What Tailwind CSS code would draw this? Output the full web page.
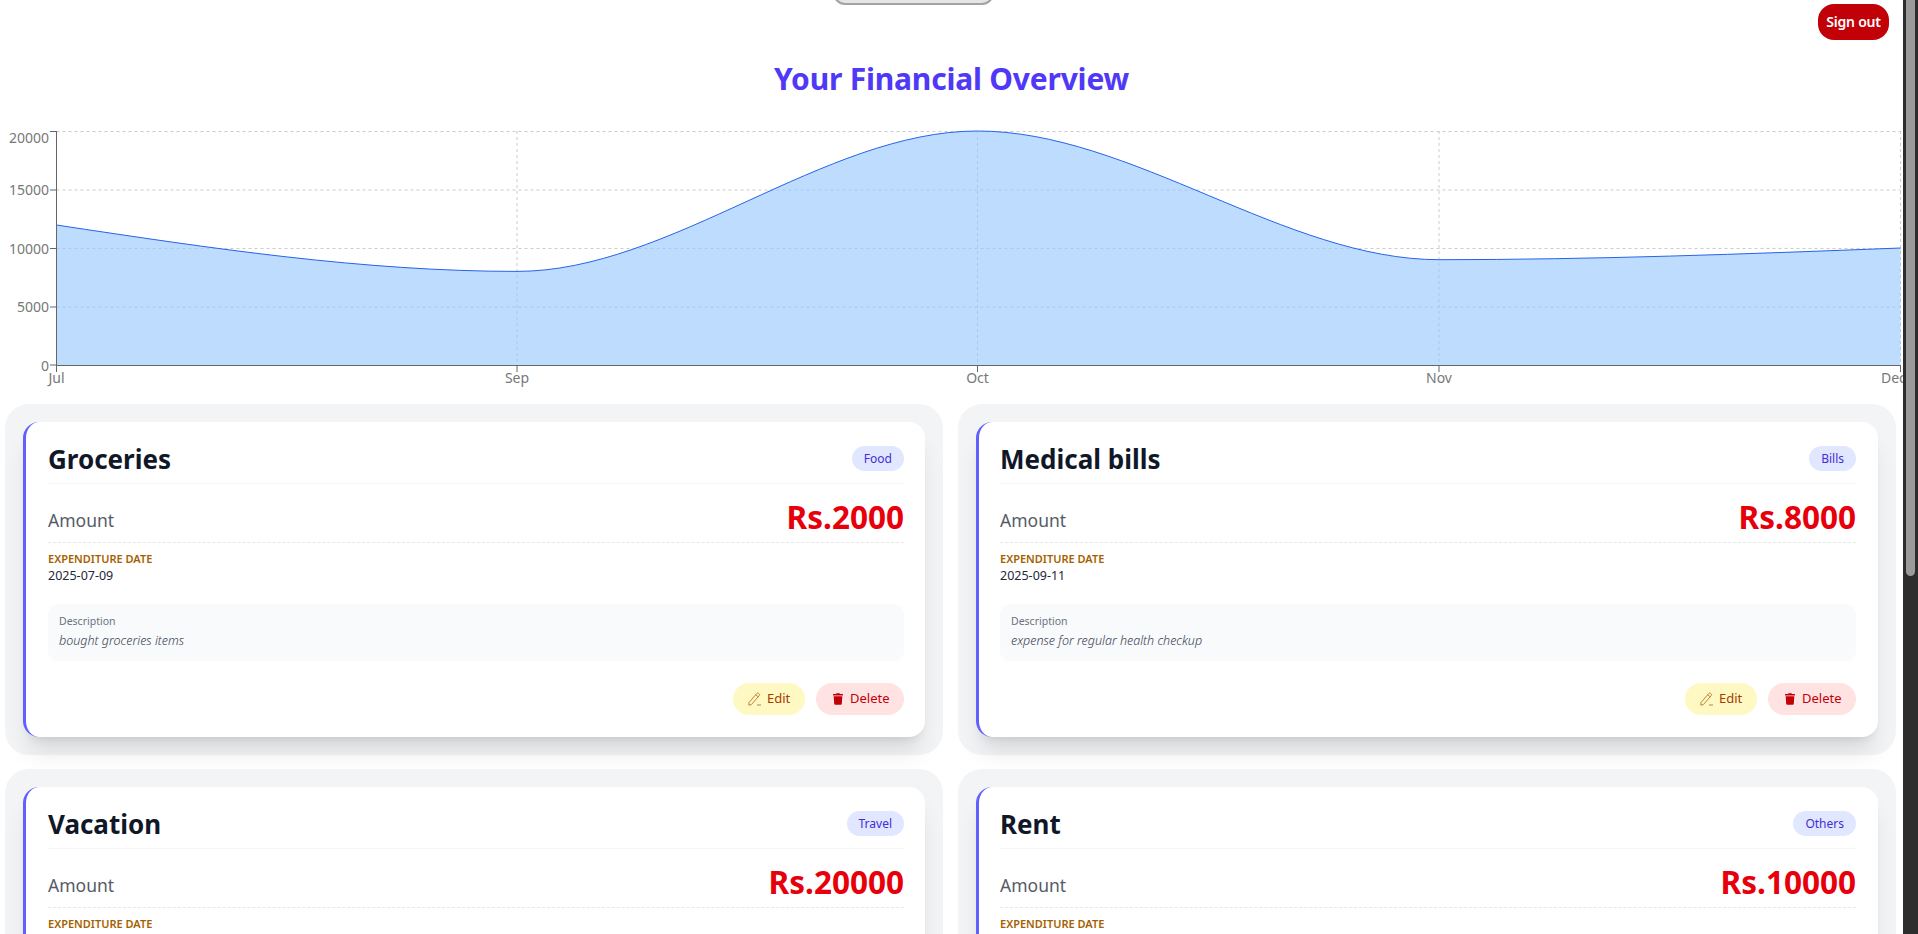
<!DOCTYPE html>
<html lang="en">
<head>
<meta charset="utf-8">
<title>Your Financial Overview</title>
<script src="https://cdn.jsdelivr.net/npm/@tailwindcss/browser@4"></script>
</head>
<body class="bg-white overflow-hidden font-['Noto_Sans',sans-serif]">
<div class="flex h-[934px] w-[1918px] overflow-hidden">
  <main class="w-[1903px] h-[934px] overflow-hidden">
    <header class="relative h-[40px] flex justify-end pt-[4px] pr-[14px]">
      <div class="absolute left-[833px] top-[-30px] w-[161px] h-[35px] rounded-xl bg-[#e5e5e5] border-2 border-[#a3a3a3]"></div>
      <button class="w-[71px] h-[36px] rounded-2xl bg-[#c10007] text-white text-[14px] leading-none font-semibold tracking-[-0.2px]">Sign out</button>
    </header>
    <h1 class="mt-[19px] h-[40px] leading-[40px] text-center text-[30px] font-bold text-[#4f39f6] tracking-[-0.2px]">Your Financial Overview</h1>
    <svg class="mt-[21px] block shrink-0" width="1903" height="270" viewBox="0 120 1903 270" font-size="14" fill="#777">
      <g stroke="#ccc" stroke-dasharray="3 3" fill="none">
        <path d="M56.5 131.5H1901M56.5 190H1901M56.5 248.5H1901M56.5 307H1901"/>
        <path d="M517 131V365M977.5 131V365M1439 131V365M1900.5 131V365"/>
      </g>
      <path d="M56.5 225C210 248.2 363.500 271.400 517 271.400C670.500 271.400 824 131 977.500 131C1131 131 1285.500 259.700 1439 259.700C1593 259.700 1746.500 254 1900.500 248V365H56.500Z" fill="#93c5fd" fill-opacity="0.6"/>
      <path d="M56.5 225C210 248.200 363.500 271.400 517 271.400C670.500 271.400 824 131 977.500 131C1131 131 1285.500 259.700 1439 259.700C1593 259.700 1746.500 254 1900.500 248" fill="none" stroke="#2563eb" stroke-width="1"/>
      <g stroke="#666" fill="none">
        <path d="M56.500 131V365.500H1901"/>
        <path d="M50 131.500H56.500M50 190H56.500M50 248.500H56.500M50 307H56.500M50 365H56.500"/>
        <path d="M56.500 365V372M517 365V372M977.500 365V372M1439 365V372M1900.500 365V372"/>
      </g>
      <g text-anchor="end">
        <text x="49" y="143">20000</text>
        <text x="49" y="195">15000</text>
        <text x="49" y="253.500">10000</text>
        <text x="49" y="312">5000</text>
        <text x="49" y="370.500">0</text>
      </g>
      <g text-anchor="middle">
        <text x="56.500" y="383">Jul</text>
        <text x="517" y="383">Sep</text>
        <text x="977.500" y="383">Oct</text>
        <text x="1439" y="383">Nov</text>
      </g>
      <text x="1881" y="383">Dec</text>
    </svg>
    <section class="mt-[14px] ml-[5px] w-[1891px] grid grid-cols-[938px_938px] gap-x-[15px] gap-y-[14px]">

      <article class="bg-[#f3f4f6] rounded-3xl p-[18px] h-[351px]">
        <div class="bg-white rounded-2xl border-l-[3px] border-[#615fff] shadow-xl h-[315px] pt-[20px] pl-[22px] pr-[21px]">
          <div class="flex items-center justify-between h-[42px] pb-[8px] border-b border-[#f3f4f6]">
            <h2 class="text-[26px] leading-[32px] font-bold text-[#101828]">Groceries</h2>
            <span class="h-[25px] leading-[25px] px-[12px] rounded-full bg-[#e0e7ff] text-[#432dd7] text-[12px]">Food</span>
          </div>
          <div class="flex items-center justify-between mt-[19px] h-[40px] pb-[3px] border-b border-dashed border-[#e5e7eb]">
            <span class="mb-[2px] text-[17.5px] text-[#555c68]">Amount</span>
            <span class="mb-[8px] text-[31.5px] leading-[36px] font-bold text-[#e7000b]">Rs.2000</span>
          </div>
          <p class="mt-[8px] text-[11px] leading-[16px] font-semibold text-[#a65f00] uppercase">Expenditure Date</p>
          <p class="mt-[1px] text-[12.5px] leading-[16px] text-[#1e2939]">2025-07-09</p>
          <div class="mt-[20px] h-[57px] pt-[9px] px-[11px] rounded-[10px] bg-[#f9fafb]">
            <p class="text-[10.5px] leading-[16px] text-[#6a7282]">Description</p>
            <p class="mt-[4px] text-[12.5px] leading-[16px] italic font-light text-[#364153]">bought groceries items</p>
          </div>
          <div class="mt-[22px] flex justify-end gap-[11px]">
            <button class="flex items-center gap-[6px] w-[72px] h-[32px] pl-[15px] rounded-full bg-[#fef9c2] text-[#a63c00] text-[13px]">
              <svg class="w-[13px] h-[14px] shrink-0" viewBox="0 0 13 14" fill="none" stroke="#b9772a" stroke-width="0.9"><path d="M1 10.500 8.800 1.500a1.200 1.200 0 0 1 1.700-.1l.6.5a1.200 1.200 0 0 1 .1 1.700L3.400 12.600 .8 13.200Z"/><path d="M7.800 2.800l2.300 2M9 13h4" /></svg>Edit
            </button>
            <button class="flex items-center gap-[7px] w-[88px] h-[32px] pl-[17px] rounded-full bg-[#ffe2e2] text-[#c10007] text-[13px]">
              <svg class="w-[10px] h-[12px] shrink-0" viewBox="0 0 448 512" fill="#c10007"><path d="M432 32H312l-9.400-18.700A24 24 0 0 0 281.100 0H166.800a23.720 23.720 0 0 0-21.400 13.300L136 32H16A16 16 0 0 0 0 48v32a16 16 0 0 0 16 16h416a16 16 0 0 0 16-16V48a16 16 0 0 0-16-16zM53.200 467a48 48 0 0 0 47.900 45h245.800a48 48 0 0 0 47.900-45L416 128H32z"/></svg>Delete
            </button>
          </div>
        </div>
      </article>

      <article class="bg-[#f3f4f6] rounded-3xl p-[18px] h-[351px]">
        <div class="bg-white rounded-2xl border-l-[3px] border-[#615fff] shadow-xl h-[315px] pt-[20px] pl-[21px] pr-[22px]">
          <div class="flex items-center justify-between h-[42px] pb-[8px] border-b border-[#f3f4f6]">
            <h2 class="text-[26px] leading-[32px] font-bold text-[#101828]">Medical bills</h2>
            <span class="h-[25px] leading-[25px] px-[12px] rounded-full bg-[#e0e7ff] text-[#432dd7] text-[12px]">Bills</span>
          </div>
          <div class="flex items-center justify-between mt-[19px] h-[40px] pb-[3px] border-b border-dashed border-[#e5e7eb]">
            <span class="mb-[2px] text-[17.5px] text-[#555c68]">Amount</span>
            <span class="mb-[8px] text-[31.5px] leading-[36px] font-bold text-[#e7000b]">Rs.8000</span>
          </div>
          <p class="mt-[8px] text-[11px] leading-[16px] font-semibold text-[#a65f00] uppercase">Expenditure Date</p>
          <p class="mt-[1px] text-[12.5px] leading-[16px] text-[#1e2939]">2025-09-11</p>
          <div class="mt-[20px] h-[57px] pt-[9px] px-[11px] rounded-[10px] bg-[#f9fafb]">
            <p class="text-[10.5px] leading-[16px] text-[#6a7282]">Description</p>
            <p class="mt-[4px] text-[12.5px] leading-[16px] italic font-light text-[#364153]">expense for regular health checkup</p>
          </div>
          <div class="mt-[22px] flex justify-end gap-[11px]">
            <button class="flex items-center gap-[6px] w-[72px] h-[32px] pl-[15px] rounded-full bg-[#fef9c2] text-[#a63c00] text-[13px]">
              <svg class="w-[13px] h-[14px] shrink-0" viewBox="0 0 13 14" fill="none" stroke="#b9772a" stroke-width="0.9"><path d="M1 10.500 8.800 1.500a1.200 1.200 0 0 1 1.700-.1l.6.5a1.200 1.200 0 0 1 .1 1.700L3.400 12.600 .8 13.200Z"/><path d="M7.800 2.800l2.300 2M9 13h4" /></svg>Edit
            </button>
            <button class="flex items-center gap-[7px] w-[88px] h-[32px] pl-[17px] rounded-full bg-[#ffe2e2] text-[#c10007] text-[13px]">
              <svg class="w-[10px] h-[12px] shrink-0" viewBox="0 0 448 512" fill="#c10007"><path d="M432 32H312l-9.400-18.700A24 24 0 0 0 281.100 0H166.800a23.720 23.720 0 0 0-21.400 13.300L136 32H16A16 16 0 0 0 0 48v32a16 16 0 0 0 16 16h416a16 16 0 0 0 16-16V48a16 16 0 0 0-16-16zM53.200 467a48 48 0 0 0 47.900 45h245.800a48 48 0 0 0 47.900-45L416 128H32z"/></svg>Delete
            </button>
          </div>
        </div>
      </article>

      <article class="bg-[#f3f4f6] rounded-3xl p-[18px] h-[351px]">
        <div class="bg-white rounded-2xl border-l-[3px] border-[#615fff] shadow-xl h-[315px] pt-[20px] pl-[22px] pr-[21px]">
          <div class="flex items-center justify-between h-[42px] pb-[8px] border-b border-[#f3f4f6]">
            <h2 class="text-[26px] leading-[32px] font-bold text-[#101828]">Vacation</h2>
            <span class="h-[25px] leading-[25px] px-[12px] rounded-full bg-[#e0e7ff] text-[#432dd7] text-[12px]">Travel</span>
          </div>
          <div class="flex items-center justify-between mt-[19px] h-[40px] pb-[3px] border-b border-dashed border-[#e5e7eb]">
            <span class="mb-[2px] text-[17.5px] text-[#555c68]">Amount</span>
            <span class="mb-[8px] text-[31.5px] leading-[36px] font-bold text-[#e7000b]">Rs.20000</span>
          </div>
          <p class="mt-[8px] text-[11px] leading-[16px] font-semibold text-[#a65f00] uppercase">Expenditure Date</p>
        </div>
      </article>

      <article class="bg-[#f3f4f6] rounded-3xl p-[18px] h-[351px]">
        <div class="bg-white rounded-2xl border-l-[3px] border-[#615fff] shadow-xl h-[315px] pt-[20px] pl-[21px] pr-[22px]">
          <div class="flex items-center justify-between h-[42px] pb-[8px] border-b border-[#f3f4f6]">
            <h2 class="text-[26px] leading-[32px] font-bold text-[#101828]">Rent</h2>
            <span class="h-[25px] leading-[25px] px-[12px] rounded-full bg-[#e0e7ff] text-[#432dd7] text-[12px]">Others</span>
          </div>
          <div class="flex items-center justify-between mt-[19px] h-[40px] pb-[3px] border-b border-dashed border-[#e5e7eb]">
            <span class="mb-[2px] text-[17.5px] text-[#555c68]">Amount</span>
            <span class="mb-[8px] text-[31.5px] leading-[36px] font-bold text-[#e7000b]">Rs.10000</span>
          </div>
          <p class="mt-[8px] text-[11px] leading-[16px] font-semibold text-[#a65f00] uppercase">Expenditure Date</p>
        </div>
      </article>
    </section>
  </main>
  <div class="w-[15px] h-[934px] bg-[#2d2d2d] pl-[3px]">
    <div class="w-[9px] h-[576px] rounded-b-full bg-[#9b9b9b]"></div>
  </div>
</div>
</body>
</html>
